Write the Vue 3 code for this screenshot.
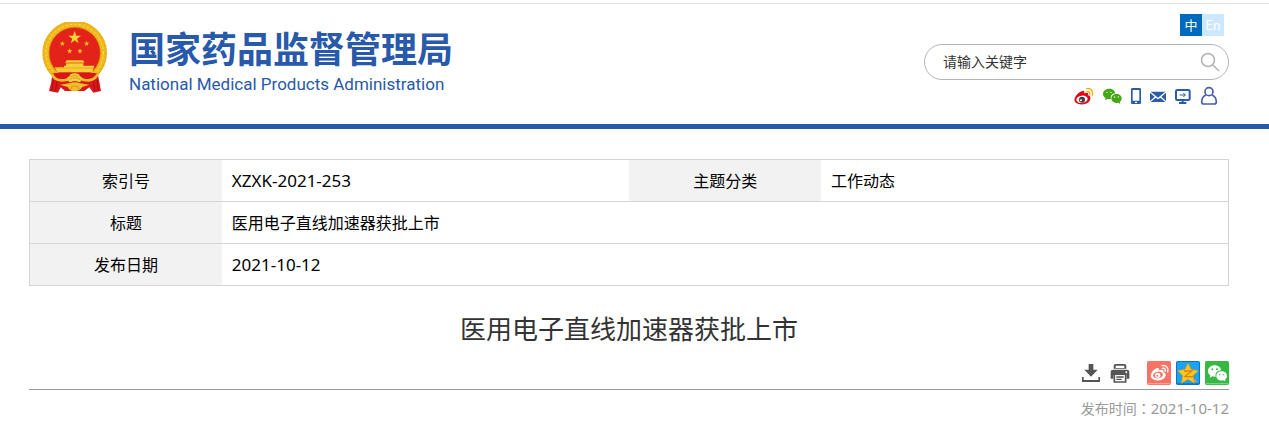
<script setup>
import { ref } from 'vue'

const keyword = ref('')
const lang = ref('zh')

const info = {
  index: 'XZXK-2021-253',
  category: '工作动态',
  title: '医用电子直线加速器获批上市',
  date: '2021-10-12'
}

const printPage = () => window.print()
</script>

<template>
  <div class="page">
    <header class="header">
      <a class="brand" href="#">
        <svg class="emblem" viewBox="33 33 201 216" aria-hidden="true">
          <circle cx="134" cy="126" r="87" fill="#e32219" stroke="#edb91d" stroke-width="20" />
          <circle cx="134" cy="126" r="94" fill="none" stroke="#d9950f" stroke-width="2" stroke-dasharray="5 7" />
          <circle cx="134" cy="126" r="86" fill="none" stroke="#ffe04b" stroke-width="3" stroke-dasharray="7 6" />
          <circle cx="134" cy="126" r="77" fill="none" stroke="#d8860c" stroke-width="2" />
          <path d="M134 60 L139 74 L153 74 L141 83 L146 97 L134 88 L122 97 L127 83 L115 74 L129 74 Z" fill="#fbd52e" />
          <path d="M97 89l2 6h6l-5 4 2 6-5-4-5 4 2-6-5-4h6z M170 89l2 6h6l-5 4 2 6-5-4-5 4 2-6-5-4h6z M119 112l2 6h6l-5 4 2 6-5-4-5 4 2-6-5-4h6z M150 112l2 6h6l-5 4 2 6-5-4-5 4 2-6-5-4h6z" fill="#f7c92a" />
          <path d="M110 148 H159 L163 155 H105 Z M108 157 H160 V164 H193 L187 184 H82 L74 169 H102 V164 H108 Z" fill="#f8cf36" />
          <path d="M108 156 H161 M78 171 H190" stroke="#db941c" stroke-width="2" />
          <!-- ribbons and knot -->
          <path d="M67 188 L74 186 H195 L203 188 L208 212 L213 240 L190 245 L178 229 L163 240 H105 L92 229 L84 245 L57 240 L64 212 Z" fill="#d9171b" />
          <path d="M70 206 L66 240 M80 212 L77 240 M201 206 L205 240 M191 212 L194 240" stroke="#a90f14" stroke-width="3" fill="none" />
          <path d="M66 190 Q74 208 94 208 Q112 208 120 202 Q134 192 150 202 Q158 208 176 208 Q194 206 203 190" fill="none" stroke="#f2bf2a" stroke-width="8" />
          <path d="M112 199 Q120 197 121 190 Q134 184 147 190 Q148 197 156 199 L151 214 L134 210 L117 214 Z" fill="#f6d03c" />
          <path d="M122 198 Q134 188 146 198 M118 206 Q134 194 151 206" stroke="#cf8313" stroke-width="2" fill="none" />
          <path d="M90 221 L117 217 Q134 210 151 217 L178 221 L157 228 Q150 240 134 241 Q118 240 113 228 Z" fill="#f0be2c" />
          <path d="M121 236 Q122 225 134 225 Q146 225 147 236" stroke="#cf8313" stroke-width="2" fill="none" />
        </svg>
        <span class="brand-text">
          <span class="brand-cn">国家药品监督管理局</span>
          <span class="brand-en">National Medical Products Administration</span>
        </span>
      </a>

      <div class="tools">
        <div class="lang">
          <button type="button" :class="{ active: lang === 'zh' }" @click="lang = 'zh'">中</button>
          <button type="button" :class="{ active: lang === 'en' }" @click="lang = 'en'">En</button>
        </div>
        <form class="search" @submit.prevent>
          <input v-model="keyword" type="text" placeholder="请输入关键字" aria-label="请输入关键字" />
          <button type="submit" aria-label="搜索">
            <svg width="20" height="20" viewBox="0 0 40 40" fill="none" stroke="#b3b3b3" stroke-width="3">
              <circle cx="16" cy="16" r="13" />
              <path d="M26 26 L38 38" />
            </svg>
          </button>
        </form>
        <nav class="links">
          <a href="#" aria-label="微博">
            <svg width="20" height="20" viewBox="24 12 60 60">
              <path d="M50 28 C56 24 60 28 57 34 C66 30 71 32 69 39 C77 42 78 49 74 56 C67 69 43 70 34 63 C25 57 28 47 35 39 C40 33 46 29 50 28 Z" fill="#e60012" />
              <ellipse cx="51" cy="52" rx="17" ry="11" transform="rotate(-8 51 52)" fill="#fff" />
              <circle cx="51" cy="53" r="9" fill="#3e3a39" />
              <circle cx="48" cy="55" r="3" fill="#fff" />
              <path d="M65 20 C77 17 86 27 82 39 M66 29 C72 27 76 31 74 37" fill="none" stroke="#f5ab00" stroke-width="4" stroke-linecap="round" />
            </svg>
          </a>
          <a href="#" aria-label="微信">
            <svg width="20" height="20" viewBox="111 12 60 60">
              <path d="M132 20 C143 20 150 26 151 34 C141 35 135 42 138 51 C135 52 131 51 128 51 L120 55 L122 48 C117 45 114 41 114 36 C114 27 122 20 132 20 Z" fill="#45a616" />
              <path d="M154 36 C164 36 170 42 170 49 C170 54 168 57 164 60 L166 66 L159 62 C148 65 139 58 139 49 C139 42 145 36 154 36 Z" fill="#45a616" />
              <g fill="#fff">
                <circle cx="126" cy="31" r="2" />
                <circle cx="138" cy="31" r="2" />
                <circle cx="149" cy="45" r="2" />
                <circle cx="160" cy="45" r="2" />
              </g>
            </svg>
          </a>
          <a href="#" aria-label="手机版">
            <svg width="10" height="20" viewBox="198 12 30 60">
              <path fill-rule="evenodd" d="M202 18 H224 Q228 18 228 22 V62 Q228 66 224 66 H202 Q198 66 198 62 V22 Q198 18 202 18 Z M203 24 V56 H223 V24 Z M210 59 V63 H216 V59 Z" fill="#2a5caa" />
            </svg>
          </a>
          <a href="#" aria-label="邮箱">
            <svg width="16" height="20" viewBox="255 12 48 60">
              <path d="M257 29 H301 L279 47 Z M255 32 L269 44 L255 57 Z M303 32 L289 44 L303 57 Z M257 60 L272 47 L279 52 L286 47 L301 60 Z" fill="#2a5caa" />
            </svg>
          </a>
          <a href="#" aria-label="电脑版">
            <svg width="16" height="20" viewBox="330 12 48 60" fill="none" stroke="#2a5caa" stroke-width="6">
              <rect x="333" y="24" width="41" height="30" rx="4" />
              <path d="M353 54 V60 M342 63 H364" />
              <path d="M344 39 H361 M355 33 L361 39 L355 45" stroke-width="3" />
            </svg>
          </a>
          <a href="#" aria-label="个人中心">
            <svg width="18" height="20" viewBox="405 12 54 60" fill="none" stroke="#4560ac" stroke-width="5">
              <circle cx="432" cy="29" r="12" />
              <path d="M423 38 C413 43 410 51 410 60 Q410 66 416 66 H448 Q454 66 454 60 C454 51 451 43 441 38" />
            </svg>
          </a>
        </nav>
      </div>
    </header>

    <main class="content">
      <table class="info">
        <tbody>
          <tr>
            <th scope="row">索引号</th>
            <td class="num">{{ info.index }}</td>
            <th scope="row">主题分类</th>
            <td>{{ info.category }}</td>
          </tr>
          <tr>
            <th scope="row">标题</th>
            <td colspan="3">{{ info.title }}</td>
          </tr>
          <tr>
            <th scope="row">发布日期</th>
            <td class="num" colspan="3">{{ info.date }}</td>
          </tr>
        </tbody>
      </table>

      <h1>{{ info.title }}</h1>

      <div class="actions">
        <a class="action" href="#" aria-label="下载">
          <svg width="20" height="20" viewBox="0 0 60 60" fill="#555">
            <path d="M23 3 H37 V20 H50 L30 41 L10 20 H23 Z M3 42 H8 V51 H52 V42 H57 V57 H3 Z" />
          </svg>
        </a>
        <button class="action" type="button" aria-label="打印" @click="printPage">
          <svg width="20" height="20" viewBox="0 0 60 60">
            <path fill-rule="evenodd" d="M17 3 H43 Q49 3 49 9 V17 H11 V9 Q11 3 17 3 Z M17 8 V15 H43 V8 Z" fill="#555" />
            <path d="M9 20 H51 Q58 20 58 27 V47 H50 V36 H10 V47 H2 V27 Q2 20 9 20 Z" fill="#555" />
            <path d="M13 36 V57 H47 V36" fill="#fff" stroke="#555" stroke-width="5" />
            <path d="M19 42 H41 M19 49 H35" stroke="#555" stroke-width="4" />
            <circle cx="49" cy="28" r="3" fill="#fff" />
          </svg>
        </button>
        <a class="share share-first" href="#" aria-label="分享到微博">
          <svg width="24" height="24" viewBox="0 0 72 72">
            <rect width="72" height="72" rx="5" fill="#f67466" />
            <path d="M2 68 H70" stroke="#fbaaa1" stroke-width="3" />
            <path d="M28 22 C35 19 38 23 36 28 C46 24 52 27 49 34 C58 37 58 44 53 50 C43 61 21 60 14 52 C6 42 18 26 28 22 Z" fill="#fff" />
            <ellipse cx="33" cy="42" rx="15" ry="10" transform="rotate(-8 33 42)" fill="#f67466" />
            <circle cx="32" cy="43" r="8" fill="#fff" />
            <circle cx="31" cy="44" r="3" fill="#f67466" />
            <path d="M45 14 C57 11 66 21 62 33 M46 22 C53 20 57 25 54 31" fill="none" stroke="#fff" stroke-width="4" stroke-linecap="round" />
          </svg>
        </a>
        <a class="share" href="#" aria-label="分享到QQ空间">
          <svg width="24" height="24" viewBox="0 0 72 72">
            <rect width="72" height="72" rx="5" fill="#0c72c8" />
            <rect x="3" y="3" width="66" height="64" rx="3" fill="#18a4f4" />
            <path d="M36 6 L45 25 L67 29 L51 44 L56 67 L36 55 L16 67 L20 44 L5 29 L27 25 Z" fill="#fcc81b" stroke="#d99517" stroke-width="2" />
            <path d="M24 30 H48 L27 46 Q40 49 51 46" fill="none" stroke="#df7d16" stroke-width="4" />
            <path d="M57 53 L64 65 L54 60 Z" fill="#f3962b" />
          </svg>
        </a>
        <a class="share" href="#" aria-label="分享到微信">
          <svg width="24" height="24" viewBox="0 0 72 72">
            <rect width="72" height="72" rx="5" fill="#36b943" />
            <path d="M2 68 H70" stroke="#86d88d" stroke-width="3" />
            <path d="M29 13 C40 13 48 20 48 28 C36 29 30 36 32 47 C29 48 25 47 22 46 L14 50 L16 43 C11 40 9 35 9 30 C9 21 18 13 29 13 Z" fill="#fff" />
            <path d="M49 31 C59 31 66 37 66 45 C66 49 64 53 60 56 L62 61 L55 58 C43 61 34 54 34 45 C34 37 41 31 49 31 Z" fill="#fff" />
            <g fill="#36b943">
              <circle cx="22" cy="25" r="3" />
              <circle cx="36" cy="25" r="3" />
              <circle cx="44" cy="41" r="2" />
              <circle cx="55" cy="41" r="2" />
            </g>
          </svg>
        </a>
      </div>

      <p class="published">发布时间<span class="colon">：</span><span class="num">{{ info.date }}</span></p>
    </main>
  </div>
</template>

<style>
body {
  background: #fff;
}
</style>

<style scoped>
.page {
  padding-top: 3px;
  font-family: "Noto Sans CJK SC", sans-serif;
  color: #000;
}

.page svg {
  display: block;
}

button,
input {
  padding: 0;
  border: 0;
  background: none;
  font-family: inherit;
}

button {
  cursor: pointer;
}

.header {
  display: flex;
  justify-content: space-between;
  align-items: flex-start;
  padding: 10px 40px 18px 41px;
  border-top: 1px solid #ddd;
  border-bottom: 5px solid #2859aa;
}

.brand {
  display: flex;
  gap: 21px;
  padding-top: 8px;
  color: #2859aa;
  text-decoration: none;
}

.emblem {
  width: 67px;
  height: 72px;
}

.brand-text {
  display: flex;
  flex-direction: column;
}

.brand-cn {
  font-size: 36px;
  font-weight: 700;
  line-height: 50px;
}

.brand-en {
  font-family: Roboto, sans-serif;
  font-size: 17px;
  line-height: 24px;
}

.tools {
  display: flex;
  flex-direction: column;
  align-items: flex-end;
}

.lang {
  display: flex;
  margin-right: 5px;
}

.lang button {
  width: 22px;
  height: 22px;
  background: #cce8ff;
  color: #fff;
  font-size: 13px;
  line-height: 20px;
}

.lang button.active {
  background: #006bbd;
}

.search {
  display: flex;
  align-items: center;
  box-sizing: border-box;
  width: 305px;
  height: 36px;
  margin-top: 8px;
  padding: 0 8px 0 18px;
  border: 1px solid #b3b3b3;
  border-radius: 18px;
}

.search input {
  flex: 1;
  min-width: 0;
  padding-bottom: 2px;
  outline: none;
  color: #333;
  font-size: 14px;
  line-height: 20px;
}

.search input::placeholder {
  color: #333;
  opacity: 1;
}

.links {
  display: flex;
  gap: 9px;
  margin: 6px 11px 0 0;
}

.links svg {
  overflow: visible;
}

.content {
  padding: 30px 40px 6px 29px;
}

.info {
  width: 100%;
  border: 1px solid #d5d5d5;
  border-collapse: collapse;
  table-layout: fixed;
  font-size: 16px;
  line-height: 24px;
}

.info tr {
  border-bottom: 1px solid #d5d5d5;
}

.info th,
.info td {
  height: 39px;
  padding: 0 0 2px;
}

.info th {
  width: 16%;
  background: #f2f2f2;
  font-weight: 400;
}

.info td {
  padding-left: 10px;
}

.num {
  font-family: "Noto Sans", sans-serif;
}

.info .num {
  height: 41px;
  padding-bottom: 0;
  font-size: 17px;
}

h1 {
  margin: 23px 0 14px;
  color: #333;
  font-size: 26px;
  font-weight: 400;
  line-height: 38px;
  text-align: center;
}

.actions {
  display: flex;
  align-items: center;
  justify-content: flex-end;
  gap: 5px;
  padding-bottom: 4px;
  border-bottom: 1px solid #999;
}

.action {
  margin-right: 4px;
}

.share-first {
  margin-left: 8px;
}

.published {
  margin: 8px 0 0;
  color: #999;
  font-size: 14px;
  line-height: 20px;
  text-align: right;
}

.published .colon {
  font-family: "Noto Sans CJK TC", sans-serif;
}

.published .num {
  font-size: 15px;
}
</style>
